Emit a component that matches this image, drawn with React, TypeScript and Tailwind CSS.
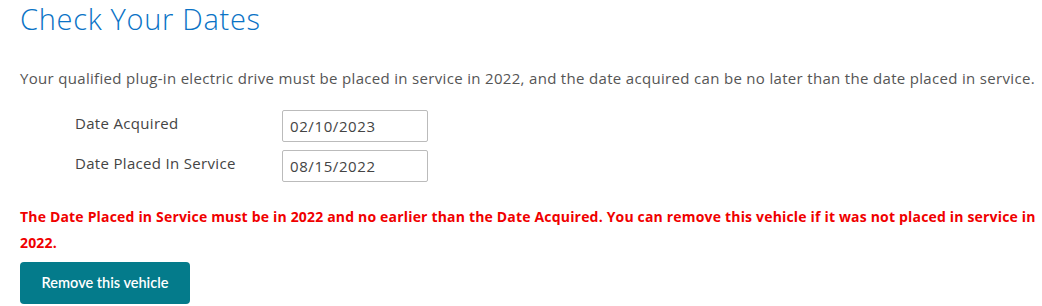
export default function App() {
  return (
    <div className="w-[1042px] h-[306px] overflow-hidden bg-white pl-5 pt-[2px] font-['Open_Sans','Noto_Sans',sans-serif]">
      <h1 className="text-[29px] leading-[34px] tracking-[0.7px] text-[#0a73c6] font-light">Check Your Dates</h1>

      <p className="mt-[32px] text-[15px] leading-[20px] tracking-[0.32px] text-[#555] whitespace-nowrap">
        Your qualified plug-in electric drive must be placed in service in 2022, and the date acquired can be no later than the date placed in service.
      </p>

      <div className="mt-[22px] pl-[55px] flex flex-col gap-[8px]">
        <div className="flex items-center">
          <label className="w-[207px] text-[15px] tracking-[0.32px] text-[#444] -mt-[6px]">Date Acquired</label>
          <div className="w-[146px] h-[32px] border border-[#bbb] rounded-[2px] px-[7px] flex items-center text-[15px] tracking-[0.6px] text-[#444]">
            02/10/2023
          </div>
        </div>
        <div className="flex items-center">
          <label className="w-[207px] text-[15px] tracking-[0.32px] text-[#444] -mt-[6px]">Date Placed In Service</label>
          <div className="w-[146px] h-[32px] border border-[#bbb] rounded-[2px] px-[7px] flex items-center text-[15px] tracking-[0.6px] text-[#444]">
            08/15/2022
          </div>
        </div>
      </div>

      <p className="mt-[22px] w-[1022px] text-[14px] leading-[26px] tracking-[0.18px] font-bold text-[#f00000]">
        The Date Placed in Service must be in 2022 and no earlier than the Date Acquired. You can remove this vehicle if it was not placed in service in 2022.
      </p>

      <button className="mt-[6px] w-[170px] h-[42px] rounded-[4px] bg-[#047b8b] text-white text-[14.5px] font-semibold font-['Lato',sans-serif]">
        Remove this vehicle
      </button>
    </div>
  );
}
